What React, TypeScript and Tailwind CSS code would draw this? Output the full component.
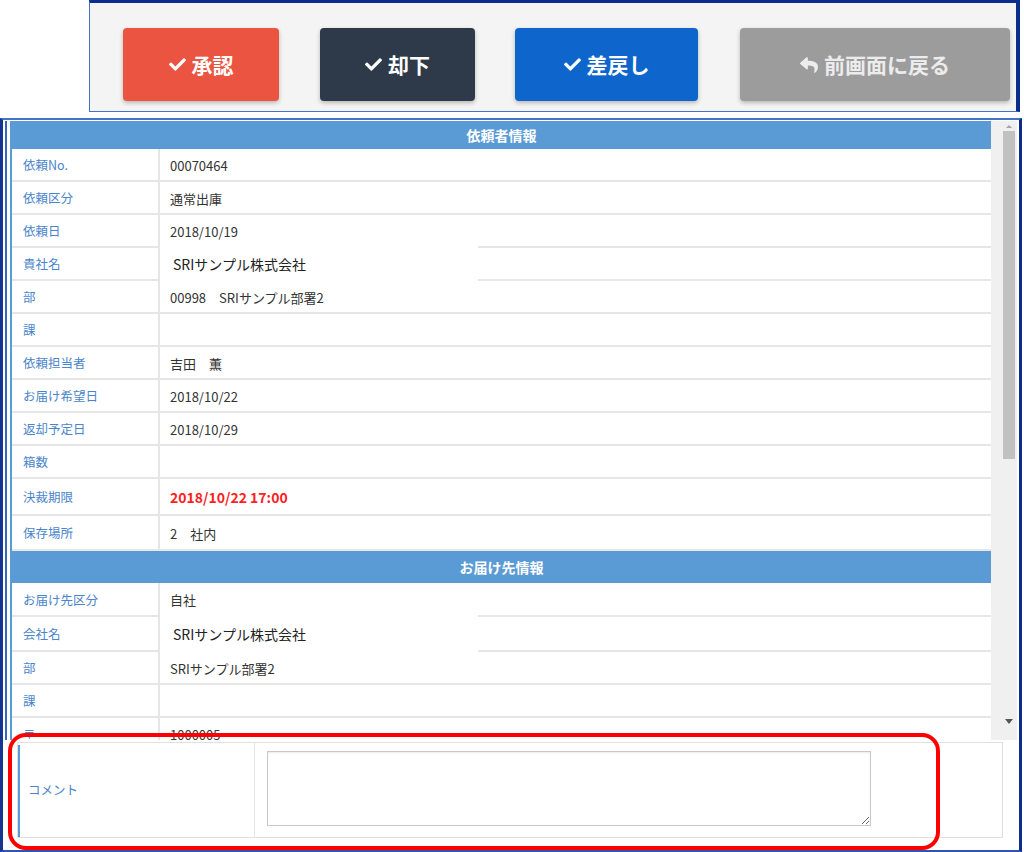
import React from "react";
import { FaCheck, FaReply } from "react-icons/fa";

type Row = {
  label: string;
  value: string;
  h?: string;
  kind?: "red" | "company";
  splitBottom?: boolean;
};

const requester: Row[] = [
  { label: "依頼No.", value: "00070464" },
  { label: "依頼区分", value: "通常出庫" },
  { label: "依頼日", value: "2018/10/19", splitBottom: true },
  { label: "貴社名", value: "SRIサンプル株式会社", kind: "company", splitBottom: true },
  { label: "部", value: "00998　SRIサンプル部署2" },
  { label: "課", value: "" },
  { label: "依頼担当者", value: "吉田　薫" },
  { label: "お届け希望日", value: "2018/10/22" },
  { label: "返却予定日", value: "2018/10/29" },
  { label: "箱数", value: "" },
  { label: "決裁期限", value: "2018/10/22 17:00", kind: "red", h: "h-[37px]" },
  { label: "保存場所", value: "2　社内", h: "h-[35px]" },
];

const delivery: Row[] = [
  { label: "お届け先区分", value: "自社", h: "h-[34px]", splitBottom: true },
  { label: "会社名", value: "SRIサンプル株式会社", kind: "company", h: "h-[35px]", splitBottom: true },
  { label: "部", value: "SRIサンプル部署2" },
  { label: "課", value: "" },
  { label: "〒", value: "1000005" },
];

function TableRow({ r }: { r: Row }) {
  return (
    <div className={`flex shrink-0 ${r.h ?? "h-[33px]"}`}>
      <div className="w-[148px] shrink-0 border-r-2 border-b-2 border-[#e6e6e6] flex items-center pl-[11px] pt-[2px] text-[12.5px] text-[#4a84cb]">
        {r.label}
      </div>
      <div className="flex-1 flex flex-col">
        <div
          className={`flex-1 flex items-center pt-[2px] ${
            r.kind === "company" ? "pl-[13px]" : "pl-[10px]"
          } ${
            r.kind === "red"
              ? "text-[14px] font-bold text-[#ff1f1f]"
              : r.kind === "company"
              ? "text-[14px] text-[#222]"
              : "text-[13px] text-[#333]"
          }`}
        >
          {r.value}
        </div>
        {r.splitBottom ? (
          <div className="flex h-[2px]">
            <div className="w-[318px] bg-white" />
            <div className="flex-1 bg-[#e6e6e6]" />
          </div>
        ) : (
          <div className="h-[2px] bg-[#e6e6e6]" />
        )}
      </div>
    </div>
  );
}

function SectionHeader({ title, h }: { title: string; h: string }) {
  return (
    <div className={`${h} shrink-0 bg-[#5b9bd5] flex items-center justify-center text-white font-bold text-[14px]`}>
      {title}
    </div>
  );
}

export default function App() {
  return (
    <div className="relative w-[1024px] h-[852px] bg-white overflow-hidden font-['Noto_Sans_CJK_JP','Noto_Sans',sans-serif]">
      {/* Top button panel */}
      <div className="ml-[89px] w-[931px] h-[112px] bg-[#f4f4f4] border-t-[3px] border-t-[#0b2d8c] border-l border-l-[#4472c4] border-r-[4px] border-r-[#0b2d8c] border-b border-b-[#4472c4] flex items-start pt-[25px] pl-[33px]">
        <button className="w-[156px] h-[73px] rounded-[4px] bg-[#ea5440] shadow-[0_2px_4px_rgba(0,0,0,0.25)] flex items-center justify-center gap-[6px] text-white font-bold text-[21px]">
          <FaCheck className="w-[17px] h-[17px]" />
          <span>承認</span>
        </button>
        <button className="ml-[41px] w-[155px] h-[73px] rounded-[4px] bg-[#2e3a4a] shadow-[0_2px_4px_rgba(0,0,0,0.25)] flex items-center justify-center gap-[6px] text-white font-bold text-[21px]">
          <FaCheck className="w-[17px] h-[17px]" />
          <span>却下</span>
        </button>
        <button className="ml-[40px] w-[183px] h-[73px] rounded-[4px] bg-[#0e66cd] shadow-[0_2px_4px_rgba(0,0,0,0.25)] flex items-center justify-center gap-[6px] text-white font-bold text-[21px]">
          <FaCheck className="w-[17px] h-[17px]" />
          <span>差戻し</span>
        </button>
        <button className="ml-[42px] w-[270px] h-[73px] rounded-[4px] bg-[#9c9c9c] shadow-[0_2px_4px_rgba(0,0,0,0.25)] flex items-center justify-center gap-[6px] text-[#ececec] font-bold text-[21px]">
          <FaReply className="w-[18px] h-[18px]" />
          <span>前画面に戻る</span>
        </button>
      </div>

      {/* Bottom panel */}
      <div className="mt-[6px] w-[1022px] h-[734px] border-t-2 border-t-[#4472c4] border-l-[3px] border-l-[#16358f] border-r-[3px] border-r-[#0b2d8c] border-b-2 border-b-[#2f55b0] flex flex-col">
        <div className="flex h-[620px] shrink-0 pt-[1px] pl-[2px]">
          <div className="w-[2px] bg-[#3566c0]" />
          <div className="w-[3px]" />
          {/* table */}
          <div className="w-[981px] overflow-hidden border-l-2 border-[#5b9bd5] flex flex-col">
            <SectionHeader title="依頼者情報" h="h-[28px]" />
            {requester.map((r, i) => (
              <TableRow key={"a" + i} r={r} />
            ))}
            <SectionHeader title="お届け先情報" h="h-[32px]" />
            {delivery.map((r, i) => (
              <TableRow key={"b" + i} r={r} />
            ))}
          </div>
          {/* scrollbar */}
          <div className="w-[26px] bg-[#f0f0f0] flex flex-col items-end pr-[2px]">
            <div className="h-[10px] w-[12px] flex items-center justify-center">
              <div className="w-0 h-0 border-l-[3px] border-r-[3px] border-b-[3px] border-l-transparent border-r-transparent border-b-[#a3a3a3]" />
            </div>
            <div className="w-[12px] h-[328px] bg-[#c1c1c1]" />
            <div className="flex-1" />
            <div className="h-[14px] w-[12px] flex items-center justify-center mb-[12px]">
              <div className="w-0 h-0 border-l-[4px] border-r-[4px] border-t-[5px] border-l-transparent border-r-transparent border-t-[#555]" />
            </div>
          </div>
        </div>

        {/* comment */}
        <div className="ml-[14px] mt-[2px] w-[986px] h-[96px] border border-[#e0e0e0] flex">
          <div className="mt-[2px] w-[2px] bg-[#5b9bd5]" />
          <div className="w-[235px] border-r border-[#e6e6e6] flex items-center pl-[8px] text-[12.5px] text-[#4a84cb]">
            コメント
          </div>
          <div className="flex-1 pl-[12px] pt-[8px]">
            <textarea
              readOnly
              className="block w-[604px] h-[75px] border border-[#c8c8c8] bg-white shadow-[inset_0_1px_2px_rgba(0,0,0,0.08)] outline-none"
            />
          </div>
        </div>
      </div>

      {/* red highlight */}
      <div className="absolute left-[8px] top-[733px] w-[932px] h-[117px] border-[4px] border-[#ff0000] rounded-[18px] pointer-events-none" />
    </div>
  );
}
